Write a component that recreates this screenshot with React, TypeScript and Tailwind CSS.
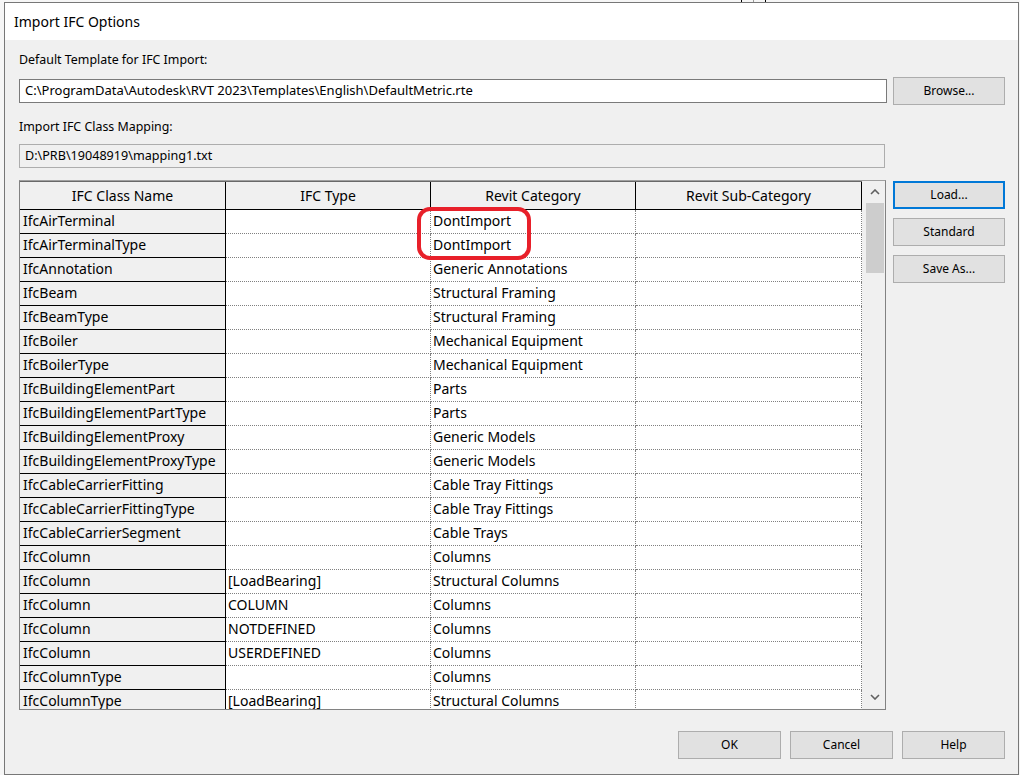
import React from "react";

const rows: [string, string, string][] = [
  ["IfcAirTerminal", "", "DontImport"],
  ["IfcAirTerminalType", "", "DontImport"],
  ["IfcAnnotation", "", "Generic Annotations"],
  ["IfcBeam", "", "Structural Framing"],
  ["IfcBeamType", "", "Structural Framing"],
  ["IfcBoiler", "", "Mechanical Equipment"],
  ["IfcBoilerType", "", "Mechanical Equipment"],
  ["IfcBuildingElementPart", "", "Parts"],
  ["IfcBuildingElementPartType", "", "Parts"],
  ["IfcBuildingElementProxy", "", "Generic Models"],
  ["IfcBuildingElementProxyType", "", "Generic Models"],
  ["IfcCableCarrierFitting", "", "Cable Tray Fittings"],
  ["IfcCableCarrierFittingType", "", "Cable Tray Fittings"],
  ["IfcCableCarrierSegment", "", "Cable Trays"],
  ["IfcColumn", "", "Columns"],
  ["IfcColumn", "[LoadBearing]", "Structural Columns"],
  ["IfcColumn", "COLUMN", "Columns"],
  ["IfcColumn", "NOTDEFINED", "Columns"],
  ["IfcColumn", "USERDEFINED", "Columns"],
  ["IfcColumnType", "", "Columns"],
  ["IfcColumnType", "[LoadBearing]", "Structural Columns"],
];

const font = { fontFamily: '"Noto Sans", "Liberation Sans", sans-serif' };

function Btn({ label, w, focused }: { label: string; w: string; focused?: boolean }) {
  return (
    <div
      className={`${w} h-[28px] flex items-center justify-center text-[12px] text-black bg-[#e1e1e1] ${
        focused ? "border-2 border-[#0078d7]" : "border border-[#adadad]"
      }`}
    >
      {label}
    </div>
  );
}

export default function App() {
  return (
    <div className="w-[1020px] h-[775px] bg-[#f6f6f6] relative overflow-hidden" style={font}>
      <div className="absolute left-[741px] top-0 w-px h-[2px] bg-black" />
      <div className="absolute left-[753px] top-0 w-px h-[2px] bg-[#999]" />
      <div className="absolute left-[765px] top-0 w-px h-[2px] bg-black" />
      <div className="pt-[2px] pl-[4px]">
        <div className="w-[1015px] h-[773px] border border-[#777] bg-[#f0f0f0] flex flex-col">
          <div className="h-[37px] bg-white flex items-center pl-[9px] text-[14px] text-black">
            Import IFC Options
          </div>
          <div className="flex-1 flex flex-col pl-[14px] pr-[13px]">
            <div className="mt-[12px] h-[16px] leading-[16px] text-[12.4px] text-black">
              Default Template for IFC Import:
            </div>
            <div className="mt-[9px] flex items-center gap-[6px] h-[28px]">
              <div className="w-[868px] h-[24px] bg-white border border-[#7a7a7a] flex items-center pl-[5px] text-[13px] text-black">
                C:\ProgramData\Autodesk\RVT 2023\Templates\English\DefaultMetric.rte
              </div>
              <Btn label="Browse..." w="w-[112px]" />
            </div>
            <div className="mt-[14px] h-[16px] leading-[16px] text-[12.4px] text-black">
              Import IFC Class Mapping:
            </div>
            <div className="mt-[9px] w-[866px] h-[24px] bg-[#f0f0f0] border border-[#adadad] flex items-center pl-[5px] text-[12.6px] text-black">
              D:\PRB\19048919\mapping1.txt
            </div>
            <div className="mt-[12px] flex gap-[7px]">
              <div className="relative w-[867px] h-[530px] border border-[#828282] border-t-[#a0a0a0] flex bg-[#f0f0f0]">
                <div className="w-[842px] overflow-hidden border-t border-[#696969]">
                  <div className="grid grid-cols-[206px_205px_205px_226px] text-[14px] text-black">
                    {["IFC Class Name", "IFC Type", "Revit Category", "Revit Sub-Category"].map((h) => (
                      <div
                        key={h}
                        className="h-[28px] bg-[#f0f0f0] border-r border-b border-black flex items-center justify-center pb-[1px]"
                      >
                        {h}
                      </div>
                    ))}
                    {rows.map((r, i) => (
                      <React.Fragment key={i}>
                        <div className="h-[24px] bg-[#f0f0f0] border-r border-b border-black flex items-center pl-[3px] pb-[2px] whitespace-nowrap overflow-hidden">
                          {r[0]}
                        </div>
                        <div className="h-[24px] bg-white border-r border-b border-dotted border-[#808080] flex items-center pl-[2px] pb-[2px] whitespace-nowrap overflow-hidden">
                          {r[1]}
                        </div>
                        <div className="h-[24px] bg-white border-r border-b border-dotted border-[#808080] flex items-center pl-[2px] pb-[2px] whitespace-nowrap overflow-hidden">
                          {r[2]}
                        </div>
                        <div className="h-[24px] bg-white border-r border-b border-dotted border-[#808080]" />
                      </React.Fragment>
                    ))}
                  </div>
                </div>
                <div className="w-[23px] flex flex-col items-center bg-[#f0f0f0] pl-[2px]">
                  <div className="h-[22px] w-[18px] flex items-center justify-center">
                    <svg width="10" height="6" viewBox="0 0 10 6">
                      <polyline points="1,5 5,1 9,5" fill="none" stroke="#606060" strokeWidth="1.6" />
                    </svg>
                  </div>
                  <div className="w-[18px] h-[70px] bg-[#cdcdcd]" />
                  <div className="flex-1" />
                  <div className="h-[22px] w-[18px] flex items-center justify-center mb-[1px]">
                    <svg width="10" height="6" viewBox="0 0 10 6">
                      <polyline points="1,1 5,5 9,1" fill="none" stroke="#606060" strokeWidth="1.6" />
                    </svg>
                  </div>
                </div>
                <div className="absolute left-[397px] top-[26px] w-[114px] h-[53px] border-4 border-[#e8202a] rounded-[13px]" />
              </div>
              <div className="flex flex-col gap-[9px] pt-[1px]">
                <Btn label="Load..." w="w-[112px]" focused />
                <Btn label="Standard" w="w-[112px]" />
                <Btn label="Save As..." w="w-[112px]" />
              </div>
            </div>
            <div className="mt-[21px] flex justify-end gap-[9px]">
              <Btn label="OK" w="w-[103px]" />
              <Btn label="Cancel" w="w-[103px]" />
              <Btn label="Help" w="w-[103px]" />
            </div>
          </div>
        </div>
      </div>
    </div>
  );
}
